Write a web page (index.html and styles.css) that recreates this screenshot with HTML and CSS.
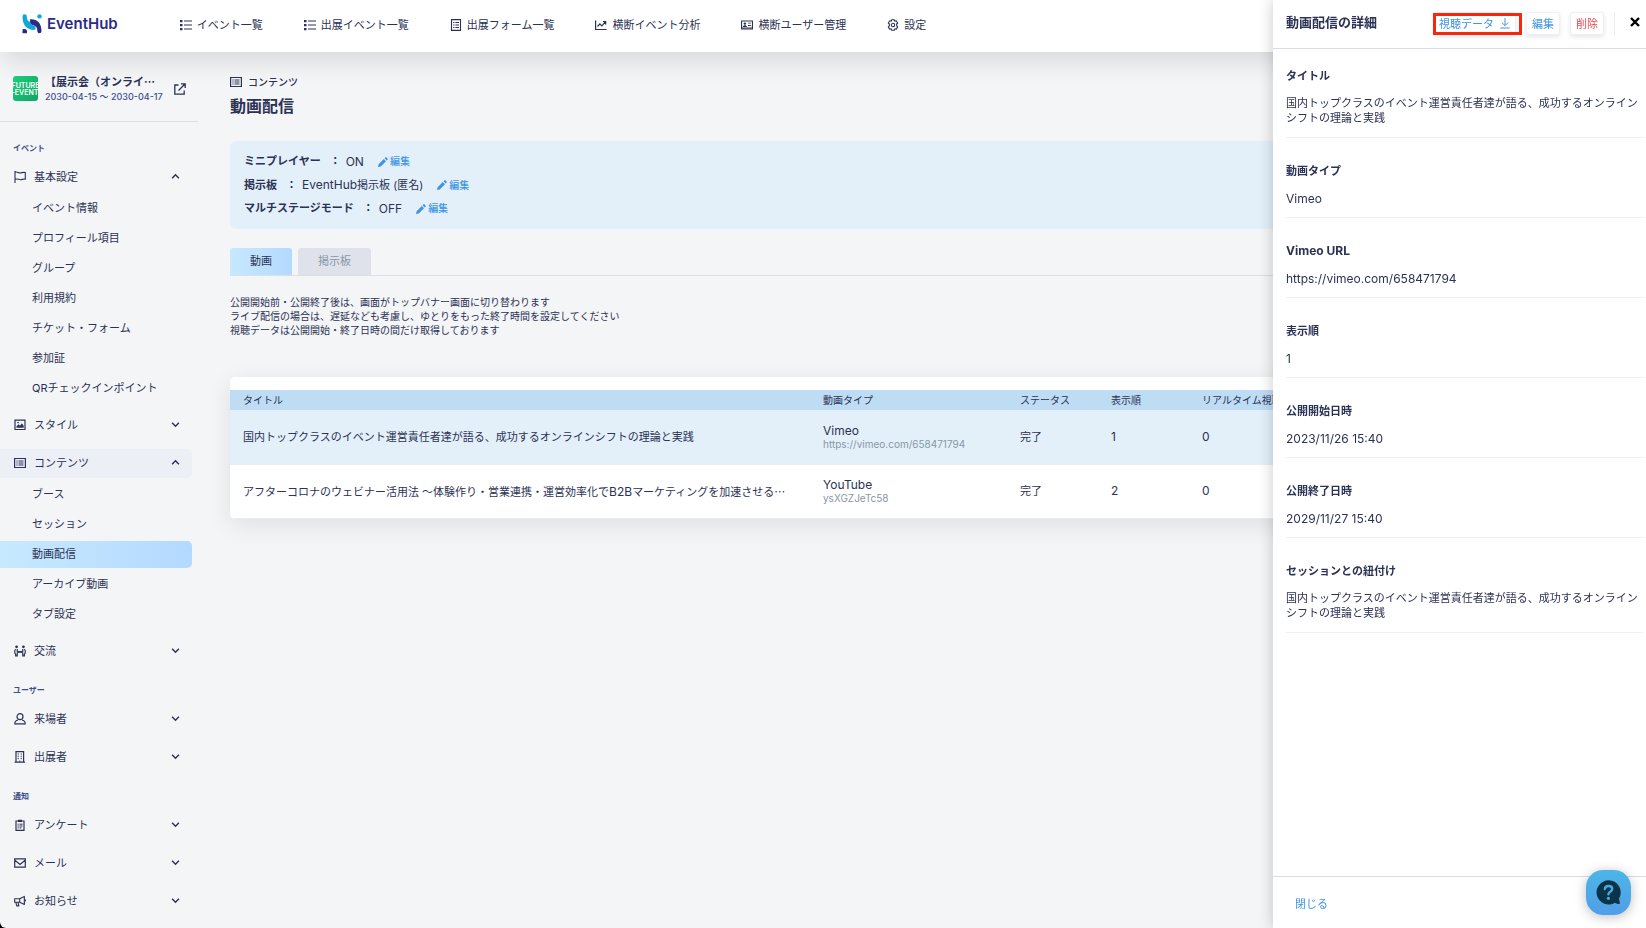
FILE: index.html
```html
<!DOCTYPE html>
<html lang="ja">
<head>
<meta charset="utf-8">
<title>動画配信 | EventHub</title>
<link rel="stylesheet" href="styles.css">
</head>
<body>
<svg class="defs" aria-hidden="true">
  <symbol id="i-list" viewBox="0 0 12 12"><path d="M0 1h2.500v2.200H0zM0 5h2.500v2.200H0zM0 9h2.500v2.200H0z" fill="currentColor"/><path d="M4 2h8M4 6h8M4 10h8" stroke="currentColor" stroke-width="1.200"/></symbol>
  <symbol id="i-doc" viewBox="0 0 12 12"><path d="M1.500.6h9v10.800h-9z" fill="none" stroke="currentColor" stroke-width="1.100"/><path d="M3.200 3.500h1.300M3.200 6h1.300M3.200 8.500h1.300M5.400 3.500h3.600M5.400 6h3.600M5.400 8.500h3.600" stroke="currentColor"/></symbol>
  <symbol id="i-chart" viewBox="0 0 12 12"><path d="M.6 1.500v9h11" fill="none" stroke="currentColor" stroke-width="1.200"/><path d="M2.500 7.500l2.400-2.600 1.900 1.900 3.400-3.600M8 2.700h2.700v2.700" fill="none" stroke="currentColor" stroke-width="1.200"/></symbol>
  <symbol id="i-card" viewBox="0 0 13 12"><path d="M.6 1.600h11.800v8.800H.6z" fill="none" stroke="currentColor" stroke-width="1.200"/><circle cx="4.200" cy="4.500" r="1.300" fill="currentColor"/><path d="M2 8.300c0-2.600 4.400-2.600 4.400 0zM7.600 3.500h3v1h-3zM7.600 6h3v1h-3zM1 8.800h11v1H1z" fill="currentColor"/></symbol>
  <symbol id="i-gear" viewBox="0 0 12 12"><path d="M4.700.7h2.600l.4 1.500 1.500-.4 1.500 2.200-1.100 1 .1 1.900 1 1-1.400 2.300-1.500-.4-.5 1.500H4.700l-.5-1.500-1.500.4L1.300 7.900l1.100-1-.1-1.900-1-1 1.500-2.200 1.500.4z" fill="none" stroke="currentColor" stroke-width="1.100" stroke-linejoin="round"/><circle cx="6" cy="6" r="1.700" fill="none" stroke="currentColor" stroke-width="1.100"/></symbol>
  <symbol id="i-content" viewBox="0 0 12 12"><path d="M.6 1.500h10.800v9H.6z" fill="none" stroke="currentColor" stroke-width="1.200"/><path d="M2.400 4h1.200M2.400 6h1.200M2.400 8h1.200M4.500 4h5M4.500 6h5M4.500 8h5" stroke="currentColor"/></symbol>
  <symbol id="i-flag" viewBox="0 0 12 12"><path d="M1 0v12M1 1.300c2-1 3.500.9 5.500.6C8.500 1.500 9.500 1 11.300 1.500v6.700c-2-.6-3 .5-4.800.5S3 7.300 1 8.300" fill="none" stroke="currentColor" stroke-width="1.100"/></symbol>
  <symbol id="i-image" viewBox="0 0 12 12"><path d="M1 1.200h10v9.300H1z" fill="none" stroke="currentColor" stroke-width="1.200"/><path d="M2.500 8.800V7.200l2-2 1.500 1.500 1.800-2.500 1.900 2.500v2.100z" fill="currentColor"/><circle cx="4" cy="3.600" r=".8" fill="currentColor"/></symbol>
  <symbol id="i-people" viewBox="0 0 13 12"><circle cx="2.800" cy="1.500" r="1.500" fill="currentColor"/><circle cx="10.200" cy="1.500" r="1.500" fill="currentColor"/><path d="M1.800 4C.4 5 .4 8.500 1.800 9.500V11.300h1.700V8l3-1.500 3 1.500v3.300h1.700V9.500c1.400-1 1.400-4.500 0-5.500M3.500 3.800v2.500l3 .8 3-.8V3.800" fill="none" stroke="currentColor" stroke-width="1.300"/></symbol>
  <symbol id="i-user" viewBox="0 0 12 12"><circle cx="6" cy="3.700" r="3" fill="none" stroke="currentColor" stroke-width="1.200"/><path d="M4 7C2 7.400.8 8.600.8 10.900h10.400C11.200 8.600 10 7.400 8 7" fill="none" stroke="currentColor" stroke-width="1.200"/></symbol>
  <symbol id="i-building" viewBox="0 0 12 12"><path d="M2 11V.7h7.600V11M.6 11.200H11" fill="none" stroke="currentColor" stroke-width="1.200"/><path d="M3.700 3h1.200M6.700 3h1.200M3.700 5.300h1.200M6.700 5.300h1.200M3.700 7.600h1.200M6.700 7.600h1.200M5.100 10.200h1.400" stroke="currentColor"/></symbol>
  <symbol id="i-clip" viewBox="0 0 12 12"><path d="M2 2h8v9.300H2z" fill="none" stroke="currentColor" stroke-width="1.200"/><path d="M4 .7h4v2.300H4z" fill="currentColor"/><path d="M3.600 5.200h1.200M3.600 7h1.200M3.600 8.900h1.200M5.500 5.200h3M5.500 7h3M5.500 8.900h2" stroke="currentColor"/></symbol>
  <symbol id="i-mail" viewBox="0 0 12 12"><path d="M.7 1.900h10.600v8.300H.7zM.9 3.200L6 7.400l5.100-4.200" fill="none" stroke="currentColor" stroke-width="1.200"/></symbol>
  <symbol id="i-horn" viewBox="0 0 13 12"><path d="M.7 3.600v3.700h5.500l5 2.400V1L6.200 3.600zM6.200 3.600v3.700M2 7.500l1 3.800h2.200l-.8-3.800M12.500 4.300v2" fill="none" stroke="currentColor" stroke-width="1.200" stroke-linejoin="round"/></symbol>
  <symbol id="i-down" viewBox="0 0 8 8"><path d="M1 2.500l3 3 3-3" fill="none" stroke="currentColor" stroke-width="1.300"/></symbol>
  <symbol id="i-up" viewBox="0 0 8 8"><path d="M1 5.500l3-3 3 3" fill="none" stroke="currentColor" stroke-width="1.300"/></symbol>
  <symbol id="i-pencil" viewBox="0 0 10 10"><path d="M0 10l.6-2.800L5.800 2 8 4.200 2.800 9.400zM6.500 1.300L7.300.5c.4-.4.900-.4 1.300 0l.9.900c.4.400.4.900 0 1.300l-.8.800z" fill="currentColor"/></symbol>
</svg>

<div class="app">
  <header class="topbar">
    <a class="logo" href="#">
      <svg width="20" height="20" viewBox="0 0 20 20" aria-hidden="true"><path d="M.5 2.500C.5.900 1.500.3 2.600.3c1.300 0 2.200.8 2.200 2.200 0 3.500 1.200 5.200 4.200 5.600 0 2.200.8 3.500 4.500 4v3.700C6 16.500.5 12.500.5 2.500z" fill="#10a8dc"/><path d="M8 5.200c7-.5 11.500 3.300 11.500 12 0 1.300-.9 2-2 2-1.300 0-2-.8-2.100-2-.2-3.700-1.200-5.500-3.900-6C9 10.700 8 9 8 5.200z" fill="#2b2a86"/><circle cx="17.500" cy="2.400" r="2.200" fill="#10a8dc"/><path d="M.5 19.200v-3.700c2.500-1 4.600 0 4.600 2 0 .7-.1 1.200-.4 1.700z" fill="#2b2a86"/></svg>
      <span>EventHub</span>
    </a>
    <nav class="topnav">
      <a href="#"><svg class="icon"><use href="#i-list"/></svg>イベント一覧</a>
      <a href="#"><svg class="icon"><use href="#i-list"/></svg>出展イベント一覧</a>
      <a href="#"><svg class="icon"><use href="#i-doc"/></svg>出展フォーム一覧</a>
      <a href="#"><svg class="icon"><use href="#i-chart"/></svg>横断イベント分析</a>
      <a href="#"><svg class="icon"><use href="#i-card"/></svg>横断ユーザー管理</a>
      <a href="#"><svg class="icon"><use href="#i-gear"/></svg>設定</a>
    </nav>
  </header>

  <div class="columns">
    <aside class="sidebar">
      <div class="event">
        <span class="event-thumb">FUTURE<br>-EVENT</span>
        <div class="event-text">
          <strong>【展示会（オンライ<span class="cjk">…</span></strong>
          <span>2030-04-15 〜 2030-04-17</span>
        </div>
        <a href="#" class="event-link" aria-label="イベントを開く"><svg width="12" height="12" viewBox="0 0 12 12"><path d="M4.500 2H.8v9.200h9.400V7.500M7 .8h4.200V5M11 1L4.500 7.500" fill="none" stroke="currentColor" stroke-width="1.300"/></svg></a>
      </div>
      <nav class="menu">
        <h2>イベント</h2>
        <button><svg class="icon"><use href="#i-flag"/></svg><span>基本設定</span><svg class="chev"><use href="#i-up"/></svg></button>
        <ul>
          <li><a href="#">イベント情報</a></li>
          <li><a href="#">プロフィール項目</a></li>
          <li><a href="#">グループ</a></li>
          <li><a href="#">利用規約</a></li>
          <li><a href="#">チケット・フォーム</a></li>
          <li><a href="#">参加証</a></li>
          <li><a href="#">QRチェックインポイント</a></li>
        </ul>
        <button><svg class="icon"><use href="#i-image"/></svg><span>スタイル</span><svg class="chev"><use href="#i-down"/></svg></button>
        <button class="open"><svg class="icon"><use href="#i-content"/></svg><span>コンテンツ</span><svg class="chev"><use href="#i-up"/></svg></button>
        <ul>
          <li><a href="#">ブース</a></li>
          <li><a href="#">セッション</a></li>
          <li><a href="#" class="current" aria-current="page">動画配信</a></li>
          <li><a href="#">アーカイブ動画</a></li>
          <li><a href="#">タブ設定</a></li>
        </ul>
        <button><svg class="icon"><use href="#i-people"/></svg><span>交流</span><svg class="chev"><use href="#i-down"/></svg></button>
        <h2>ユーザー</h2>
        <button><svg class="icon"><use href="#i-user"/></svg><span>来場者</span><svg class="chev"><use href="#i-down"/></svg></button>
        <button><svg class="icon"><use href="#i-building"/></svg><span>出展者</span><svg class="chev"><use href="#i-down"/></svg></button>
        <h2>通知</h2>
        <button><svg class="icon"><use href="#i-clip"/></svg><span>アンケート</span><svg class="chev"><use href="#i-down"/></svg></button>
        <button><svg class="icon"><use href="#i-mail"/></svg><span>メール</span><svg class="chev"><use href="#i-down"/></svg></button>
        <button><svg class="icon"><use href="#i-horn"/></svg><span>お知らせ</span><svg class="chev"><use href="#i-down"/></svg></button>
      </nav>
    </aside>

    <main class="main">
      <p class="crumb"><svg class="icon"><use href="#i-content"/></svg>コンテンツ</p>
      <h1>動画配信</h1>

      <dl class="settings">
        <div><dt>ミニプレイヤー</dt><dd class="latin">ON</dd><dd><a href="#"><svg><use href="#i-pencil"/></svg>編集</a></dd></div>
        <div><dt>掲示板</dt><dd><span class="latin">EventHub</span>掲示板 (匿名)</dd><dd><a href="#"><svg><use href="#i-pencil"/></svg>編集</a></dd></div>
        <div><dt>マルチステージモード</dt><dd class="latin">OFF</dd><dd><a href="#"><svg><use href="#i-pencil"/></svg>編集</a></dd></div>
      </dl>

      <div class="tabs" role="tablist">
        <button role="tab" aria-selected="true" class="tab active">動画</button>
        <button role="tab" aria-selected="false" class="tab">掲示板</button>
      </div>

      <p class="notes">公開開始前・公開終了後は、画面がトップバナー画面に切り替わります<br>ライブ配信の場合は、遅延なども考慮し、ゆとりをもった終了時間を設定してください<br>視聴データは公開開始・終了日時の間だけ取得しております</p>

      <div class="card">
        <table>
          <colgroup><col class="c-title"><col class="c-type"><col class="c-status"><col class="c-order"><col></colgroup>
          <thead><tr><th>タイトル</th><th>動画タイプ</th><th>ステータス</th><th>表示順</th><th>リアルタイム視聴</th></tr></thead>
          <tbody>
            <tr class="selected"><td>国内トップクラスのイベント運営責任者達が語る、成功するオンラインシフトの理論と実践</td><td class="latin">Vimeo<small>https://vimeo.com/658471794</small></td><td>完了</td><td class="latin">1</td><td class="latin">0</td></tr>
            <tr><td>アフターコロナのウェビナー活用法 〜体験作り・営業連携・運営効率化で<span class="latin">B2B</span>マーケティングを加速させる<span class="cjk">…</span></td><td class="latin">YouTube<small>ysXGZJeTc58</small></td><td>完了</td><td class="latin">2</td><td class="latin">0</td></tr>
          </tbody>
        </table>
      </div>
    </main>
  </div>
</div>

<section class="drawer" aria-labelledby="drawer-title">
  <header class="drawer-head">
    <h2 id="drawer-title">動画配信の詳細</h2>
    <div class="actions">
      <button class="btn marked">視聴データ<svg width="10" height="11" viewBox="0 0 10 11" aria-hidden="true"><path d="M5 0v7.500M1.800 4.500L5 7.700l3.200-3.200M.3 10h9.400" fill="none" stroke="currentColor"/></svg></button>
      <button class="btn">編集</button>
      <button class="btn danger">削除</button>
      <span class="sep"></span>
      <button class="close" aria-label="閉じる"><svg width="10" height="10" viewBox="0 0 10 10"><path d="M1 1l8 8M9 1L1 9" stroke="currentColor" stroke-width="2.400"/></svg></button>
    </div>
  </header>
  <dl class="fields">
    <div><dt>タイトル</dt><dd>国内トップクラスのイベント運営責任者達が語る、成功するオンラインシフトの理論と実践</dd></div>
    <div><dt>動画タイプ</dt><dd class="latin">Vimeo</dd></div>
    <div><dt class="latin">Vimeo URL</dt><dd class="latin">https://vimeo.com/658471794</dd></div>
    <div><dt>表示順</dt><dd class="latin">1</dd></div>
    <div><dt>公開開始日時</dt><dd class="latin">2023/11/26 15:40</dd></div>
    <div><dt>公開終了日時</dt><dd class="latin">2029/11/27 15:40</dd></div>
    <div><dt>セッションとの紐付け</dt><dd>国内トップクラスのイベント運営責任者達が語る、成功するオンラインシフトの理論と実践</dd></div>
  </dl>
  <footer class="drawer-foot"><button>閉じる</button></footer>
</section>

<button class="help" aria-label="ヘルプ">
  <svg width="25" height="25" viewBox="0 0 25 25" aria-hidden="true"><path d="M12.500.3a12.100 12.100 0 1 0 6.500 22.400c1.600 1 3.300 1.400 5 1.100l-1-5.300A12.100 12.100 0 0 0 12.500.3z" fill="#0c3448"/><path d="M8.900 9c.3-4 7.300-4 7.300 0 0 2.800-3.800 2.600-3.800 5.300" fill="none" stroke="#4aa9e2" stroke-width="2.400" stroke-linecap="round"/><circle cx="12.400" cy="18.300" r="1.600" fill="#4aa9e2"/></svg>
</button>
</body>
</html>
```
FILE: styles.css
```css
* { box-sizing: border-box; margin: 0; padding: 0; }

html { background: #000; }

body {
  font-family: Inter, "Noto Sans CJK JP", sans-serif;
  font-size: 11px;
  line-height: 14px;
  color: #2b3254;
}

a { color: inherit; text-decoration: none; }
button { font: inherit; color: inherit; border: 0; background: none; cursor: pointer; }
ul { list-style: none; }
svg { display: block; flex: none; }

.defs { position: absolute; width: 0; height: 0; }
.icon { width: 12px; height: 12px; }
.cjk { font-family: "Noto Sans CJK JP", sans-serif; }
.latin { font-size: 12px; }

.app {
  display: flex;
  flex-direction: column;
  height: 100vh;
  overflow: hidden;
  background: #f4f5f7;
  border-bottom-left-radius: 6px;
}

/* Top bar */
.topbar {
  display: flex;
  flex: none;
  align-items: center;
  gap: 62px;
  height: 52px;
  padding: 0 22px 4px;
  background: #fff;
  box-shadow: 0 12px 24px -2px rgba(0, 0, 0, .11);
  z-index: 1;
}
.logo {
  display: flex;
  align-items: center;
  gap: 5px;
  font-size: 15px;
  font-weight: 600;
  color: #2b2a86;
}
.topnav { display: flex; gap: 41px; padding-top: 2px; white-space: nowrap; }
.topnav a { display: flex; align-items: center; gap: 5px; }

.columns { display: flex; flex: 1; min-height: 0; }

/* Sidebar */
.sidebar { flex: none; width: 198px; }
.event {
  display: flex;
  align-items: center;
  gap: 7px;
  height: 70px;
  padding: 4px 12px 0 13px;
  border-bottom: 1px solid #dcdfe4;
}
.event-thumb {
  flex: none;
  display: flex;
  align-items: center;
  justify-content: center;
  width: 25px;
  height: 25px;
  overflow: hidden;
  border-radius: 3px;
  background: linear-gradient(135deg, #1fcf7c, #0fa566);
  color: #fff;
  font-size: 7px;
  font-weight: 600;
  line-height: 7px;
  white-space: nowrap;
}
.event-text { flex: 1; min-width: 0; white-space: nowrap; }
.event-text strong { display: block; line-height: 16px; }
.event-text > span { display: block; font-size: 9px; font-weight: 500; color: #3f4f8c; }
.event-link { margin-left: auto; }

.menu h2 {
  margin: 18px 13px 9px;
  font-size: 8px;
  line-height: 12px;
  color: #3f4f8c;
}
.menu h2:first-child { margin-top: 20px; }
.menu button {
  display: flex;
  align-items: center;
  gap: 8px;
  width: 192px;
  height: 29px;
  padding: 0 12px 2px 14px;
  border-radius: 0 5px 5px 0;
  text-align: left;
}
.menu button span { flex: 1; }
.menu button + button, .menu ul + button { margin-top: 9px; }
.menu .open { background: #eceff5; }
.chev { width: 9px; height: 9px; }
.menu ul { display: grid; gap: 3px; padding-top: 3px; }
.menu li a {
  display: block;
  width: 192px;
  padding-left: 32px;
  line-height: 27px;
  border-radius: 0 5px 5px 0;
}
.menu li .current { background: linear-gradient(90deg, #c7e9ff, #b4d9ff); }

/* Main */
.main { flex: 1; min-width: 0; padding: 22px 32px 0; }
.crumb {
  display: flex;
  align-items: center;
  gap: 6px;
  font-size: 10px;
  font-weight: 500;
  line-height: 16px;
}
h1 { margin-top: 4px; font-size: 16px; line-height: 24px; }

.settings {
  margin-top: 23px;
  padding: 9px 14px;
  border-radius: 6px;
  background: #e3f0fa;
}
.settings > div { display: flex; align-items: center; line-height: 23px; }
.settings dt { font-weight: 700; }
.settings dt::after { content: "："; margin-left: 9px; margin-right: 5px; }
.settings dd + dd { margin-left: 14px; }
.settings a { display: flex; align-items: center; gap: 2px; font-size: 10px; font-weight: 500; color: #4094e4; }
.settings svg { width: 10px; height: 10px; }

.tabs {
  display: flex;
  gap: 6px;
  margin-top: 19px;
  border-bottom: 1px solid #dcdfe8;
}
.tab {
  height: 27px;
  padding: 0 20px 2px;
  border-radius: 3px 3px 0 0;
  background: #dfe2ea;
  color: #8697a8;
}
.tab.active { background: linear-gradient(90deg, #c7e9ff, #b4d9ff); color: #2b3254; }

.notes { margin-top: 19px; font-size: 10px; line-height: 14px; }

.card {
  margin-top: 40px;
  padding-top: 13px;
  overflow: hidden;
  border-radius: 5px;
  background: #fff;
  box-shadow: 0 6px 24px rgba(0, 0, 0, .09);
}
table { width: 100%; border-collapse: collapse; table-layout: fixed; }
.c-title { width: 580px; }
.c-type { width: 197px; }
.c-status, .c-order { width: 91px; }
th, td { padding: 0 13px; text-align: left; white-space: nowrap; }
th { height: 20px; background: #bedcf4; font-size: 10px; font-weight: 400; }
td { height: 54px; border-bottom: 1px solid #eaedf2; }
.selected td { background: #e3f0fa; }
small { display: block; font-size: 10px; line-height: 12px; color: #8697a8; }

/* Drawer */
.drawer {
  position: fixed;
  top: 0;
  right: 0;
  bottom: 0;
  z-index: 2;
  display: flex;
  flex-direction: column;
  width: 373px;
  background: #fff;
  box-shadow: 0 0 14px rgba(0, 0, 0, .22);
}
.drawer-head {
  display: flex;
  align-items: center;
  justify-content: space-between;
  height: 49px;
  padding: 0 1px 1px 13px;
  border-bottom: 1px solid #d9dce8;
}
.drawer-head h2 { padding-bottom: 4px; font-size: 13px; line-height: 18px; }
.actions { display: flex; align-items: center; gap: 10px; }
.btn {
  position: relative;
  display: flex;
  align-items: center;
  gap: 6px;
  height: 23px;
  padding: 0 5px;
  border: 1px solid #edf0f5;
  border-radius: 3px;
  background: #fff;
  box-shadow: 0 2px 4px rgba(40, 60, 100, .12);
  color: #4094e4;
}
.marked { padding: 0 5px 0 3px; }
.marked::after {
  content: "";
  position: absolute;
  inset: 0 -7px -1px -3px;
  border: 3px solid #f8260c;
}
.danger { color: #e5484d; }
.sep { width: 1px; height: 23px; background: #eaedf2; }
.close { padding: 3px 5px 7px; color: #000; }

.fields { flex: 1; padding: 0 2px 0 13px; overflow: hidden; }
.fields > div { padding: 25px 0 11px; border-bottom: 1px solid #f0f1f4; }
.fields > div:first-child { padding-top: 19px; }
.fields dt { margin-bottom: 12px; font-weight: 700; line-height: 16px; }
.fields dd { line-height: 15px; }

.drawer-foot {
  height: 52px;
  padding: 20px 22px 0;
  border-top: 1px solid #d9dce8;
  color: #4094e4;
}

.help {
  position: fixed;
  right: 15px;
  bottom: 13px;
  z-index: 3;
  display: grid;
  place-items: center;
  width: 45px;
  height: 45px;
  border-radius: 17px;
  background: linear-gradient(#4db6e6, #509ee8);
  box-shadow: 0 2px 12px rgba(0, 0, 0, .25);
}
```
